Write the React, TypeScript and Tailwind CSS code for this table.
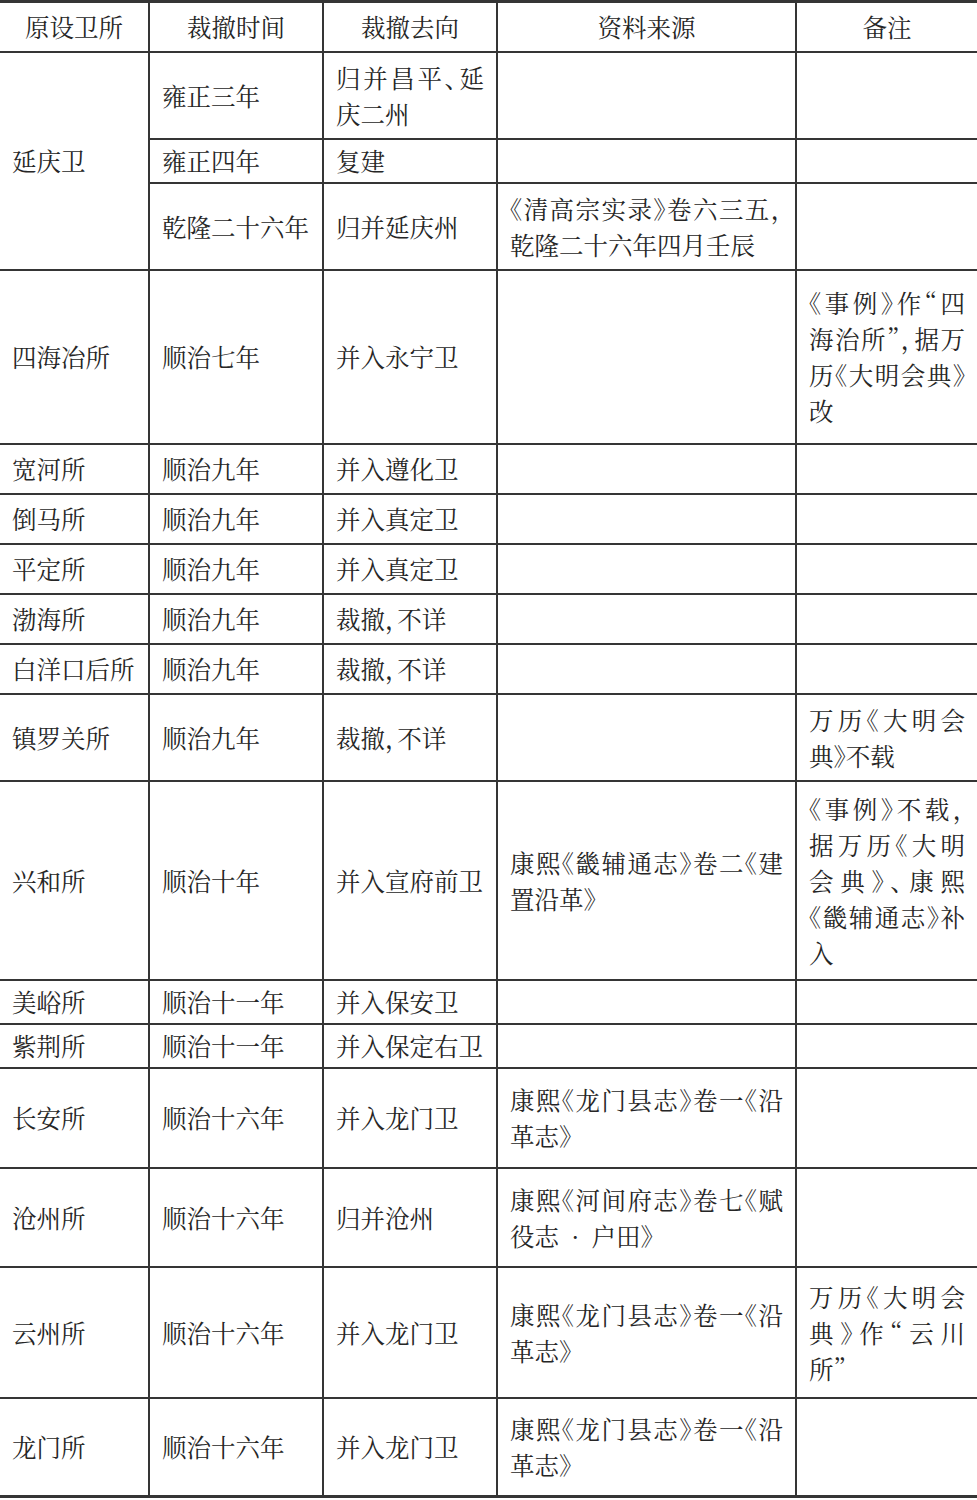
import React from "react";

type CellProps = { lines?: string[]; center?: boolean; extra?: string };

function Cell({ lines = [], center = false, extra = "" }: CellProps) {
  return (
    <div
      className={`bg-white flex flex-col justify-center px-[12px] ${
        center ? "items-center" : ""
      } ${extra}`}
    >
      {lines.map((l, i) => (
        <div
          key={i}
          className={
            i < lines.length - 1
              ? "whitespace-nowrap text-justify [text-align-last:justify]"
              : "whitespace-nowrap"
          }
        >
          {l}
        </div>
      ))}
    </div>
  );
}

type Row = {
  a?: string[];
  b: string[];
  c: string[];
  d?: string[];
  e?: string[];
};

const rows: Row[] = [
  { a: ["延庆卫"], b: ["雍正三年"], c: ["归并昌平、延", "庆二州"] },
  { b: ["雍正四年"], c: ["复建"] },
  {
    b: ["乾隆二十六年"],
    c: ["归并延庆州"],
    d: ["《清高宗实录》卷六三五，", "乾隆二十六年四月壬辰"],
  },
  {
    a: ["四海冶所"],
    b: ["顺治七年"],
    c: ["并入永宁卫"],
    e: ["《事例》作“四", "海治所”，据万", "历《大明会典》", "改"],
  },
  { a: ["宽河所"], b: ["顺治九年"], c: ["并入遵化卫"] },
  { a: ["倒马所"], b: ["顺治九年"], c: ["并入真定卫"] },
  { a: ["平定所"], b: ["顺治九年"], c: ["并入真定卫"] },
  { a: ["渤海所"], b: ["顺治九年"], c: ["裁撤，不详"] },
  { a: ["白洋口后所"], b: ["顺治九年"], c: ["裁撤，不详"] },
  {
    a: ["镇罗关所"],
    b: ["顺治九年"],
    c: ["裁撤，不详"],
    e: ["万历《大明会", "典》不载"],
  },
  {
    a: ["兴和所"],
    b: ["顺治十年"],
    c: ["并入宣府前卫"],
    d: ["康熙《畿辅通志》卷二《建", "置沿革》"],
    e: ["《事例》不载，", "据万历《大明", "会典》、康熙", "《畿辅通志》补", "入"],
  },
  { a: ["美峪所"], b: ["顺治十一年"], c: ["并入保安卫"] },
  { a: ["紫荆所"], b: ["顺治十一年"], c: ["并入保定右卫"] },
  {
    a: ["长安所"],
    b: ["顺治十六年"],
    c: ["并入龙门卫"],
    d: ["康熙《龙门县志》卷一《沿", "革志》"],
  },
  {
    a: ["沧州所"],
    b: ["顺治十六年"],
    c: ["归并沧州"],
    d: ["康熙《河间府志》卷七《赋", "役志\u2002·\u2002户田》"],
  },
  {
    a: ["云州所"],
    b: ["顺治十六年"],
    c: ["并入龙门卫"],
    d: ["康熙《龙门县志》卷一《沿", "革志》"],
    e: ["万历《大明会", "典》作“云川", "所”"],
  },
  {
    a: ["龙门所"],
    b: ["顺治十六年"],
    c: ["并入龙门卫"],
    d: ["康熙《龙门县志》卷一《沿", "革志》"],
  },
];

export default function App() {
  return (
    <div className="w-[977px] h-[1500px] bg-white">
      <div
        className="grid grid-cols-[148px_172px_172px_297px_180px] grid-rows-[48px_85px_42px_85px_172px_48px_48px_48px_48px_48px_85px_197px_42px_42px_98px_97px_129px_96px] gap-[2px] bg-[#353535] pt-[3px] pb-[3px] font-['Noto_Serif_CJK_SC','Noto_Sans_CJK_SC',serif] text-[24.5px] leading-[36px] text-[#262626] [font-feature-settings:'halt']"
      >
        <Cell lines={["原设卫所"]} center />
        <Cell lines={["裁撤时间"]} center />
        <Cell lines={["裁撤去向"]} center />
        <Cell lines={["资料来源"]} center />
        <Cell lines={["备注"]} center />
        {rows.map((r, i) => (
          <React.Fragment key={i}>
            {r.a && <Cell lines={r.a} extra={i === 0 ? "row-span-3" : ""} />}
            <Cell lines={r.b} />
            <Cell lines={r.c} />
            <Cell lines={r.d} />
            <Cell lines={r.e} />
          </React.Fragment>
        ))}
      </div>
    </div>
  );
}
